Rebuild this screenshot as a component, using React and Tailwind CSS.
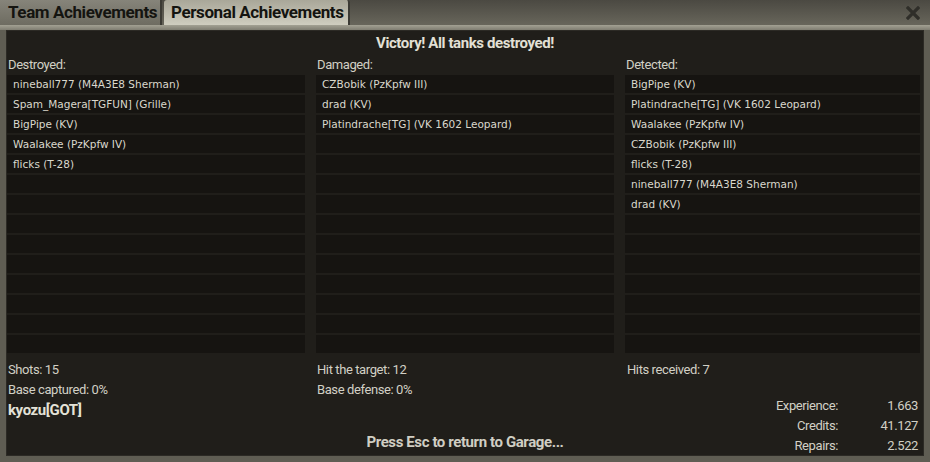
import React from 'react'

const destroyed = [
  'nineball777 (M4A3E8 Sherman)',
  'Spam_Magera[TGFUN] (Grille)',
  'BigPipe (KV)',
  'Waalakee (PzKpfw IV)',
  'flicks (T-28)',
]
const damaged = ['CZBobik (PzKpfw III)', 'drad (KV)', 'Platindrache[TG] (VK 1602 Leopard)']
const detected = [
  'BigPipe (KV)',
  'Platindrache[TG] (VK 1602 Leopard)',
  'Waalakee (PzKpfw IV)',
  'CZBobik (PzKpfw III)',
  'flicks (T-28)',
  'nineball777 (M4A3E8 Sherman)',
  'drad (KV)',
]

const narrow = "font-['Roboto',sans-serif] tracking-[-0.4px]"
const body = "font-['DejaVu_Sans','Noto_Sans',sans-serif]"

function List({ title, items }) {
  const rows = Array.from({ length: 14 }, (_, i) => items[i] || '')
  return (
    <div className="flex flex-col">
      <div className={`${narrow} text-[13px] leading-[14px] text-[#d2d0c5] pl-[1px] h-[18px] pt-[1px]`}>{title}</div>
      <div className="flex flex-col gap-[2px]">
        {rows.map((r, i) => (
          <div key={i} className={`${body} h-[18px] bg-[#161411] text-[10.5px] leading-[18px] text-[#dad8cd] pl-[6px] whitespace-nowrap`}>
            {r}
          </div>
        ))}
      </div>
    </div>
  )
}

function Stat({ children, bold }) {
  return (
    <div className={`${narrow} h-[20px] leading-[20px] ${bold ? 'text-[15px] font-bold text-[#e4e2d7]' : 'text-[13px] text-[#d2d0c5]'} pl-[1px]`}>
      {children}
    </div>
  )
}

export default function App() {
  return (
    <div className="w-[930px] h-[462px] overflow-hidden bg-[#5e5c52] flex flex-col">
      <div className="h-[25px] shrink-0 flex items-end bg-gradient-to-b from-[#4b4942] to-[#68665b]">
        <div className={`${narrow} h-[25px] w-[162px] bg-gradient-to-b from-[#86847a] to-[#6e6c61] border-r-2 border-[#3b3a34] text-[17px] font-bold text-[#141410] leading-[25px] pl-[8px] whitespace-nowrap`}>
          Team Achievements
        </div>
        <div className={`${narrow} ml-[2px] h-[25px] w-[186px] rounded-t-[3px] bg-gradient-to-b from-[#a9a799] to-[#cfcdbf] border-r-2 border-[#3b3a34] text-[17px] font-bold text-[#141410] leading-[25px] pl-[7px] whitespace-nowrap`}>
          Personal Achievements
        </div>
        <div className="flex-1" />
        <svg width="14" height="14" viewBox="0 0 14 14" className="mr-[10px] mb-[5px]">
          <path d="M2 2 L12 12 M12 2 L2 12" stroke="#2f2e29" strokeWidth="3.2" strokeLinecap="square" />
        </svg>
      </div>
      <div className="h-[5px] shrink-0 bg-gradient-to-b from-[#a3a193] to-[#7f7d71]" />
      <div className="h-[432px] shrink-0 px-[6px] pb-[6px] bg-[#5f5d53]">
        <div className="h-full border border-[#2c2a25] bg-[#201e1a] flex flex-col">
          <div className={`${narrow} shrink-0 text-center text-[15px] font-bold text-[#e2e0d5] h-[24px] leading-[22px] pt-[1px]`}>
            Victory! All tanks destroyed!
          </div>
          <div className="shrink-0 grid grid-cols-[298px_298px_1fr] gap-x-[11px] pr-[3px] mt-[2px]">
            <List title="Destroyed:" items={destroyed} />
            <List title="Damaged:" items={damaged} />
            <List title="Detected:" items={detected} />
          </div>
          <div className="shrink-0 grid grid-cols-[309px_310px_1fr] pt-[7px]">
            <div className="col-start-1 row-start-1">
              <Stat>Shots: 15</Stat>
              <Stat>Base captured: 0%</Stat>
              <Stat bold>kyozu[GOT]</Stat>
            </div>
            <div className="col-start-2 row-start-1">
              <Stat>Hit the target: 12</Stat>
              <Stat>Base defense: 0%</Stat>
            </div>
            <div className="col-start-3 row-start-1 row-span-2">
              <Stat>Hits received: 7</Stat>
              <div className={`${narrow} mt-[16px] text-[13px] text-[#d2d0c5] grid grid-cols-[1fr_80px] pr-[5px]`}>
                <div className="text-right h-[20px] leading-[20px]">Experience:</div>
                <div className="text-right h-[20px] leading-[20px]">1.663</div>
                <div className="text-right h-[20px] leading-[20px]">Credits:</div>
                <div className="text-right h-[20px] leading-[20px]">41.127</div>
                <div className="text-right h-[20px] leading-[20px]">Repairs:</div>
                <div className="text-right h-[20px] leading-[20px]">2.522</div>
              </div>
            </div>
            <div className={`${narrow} col-start-1 col-span-3 row-start-2 self-start text-center text-[15px] font-bold text-[#d0cec3] pt-[8px] leading-[20px]`}>
              Press Esc to return to Garage...
            </div>
          </div>
        </div>
      </div>
    </div>
  )
}
